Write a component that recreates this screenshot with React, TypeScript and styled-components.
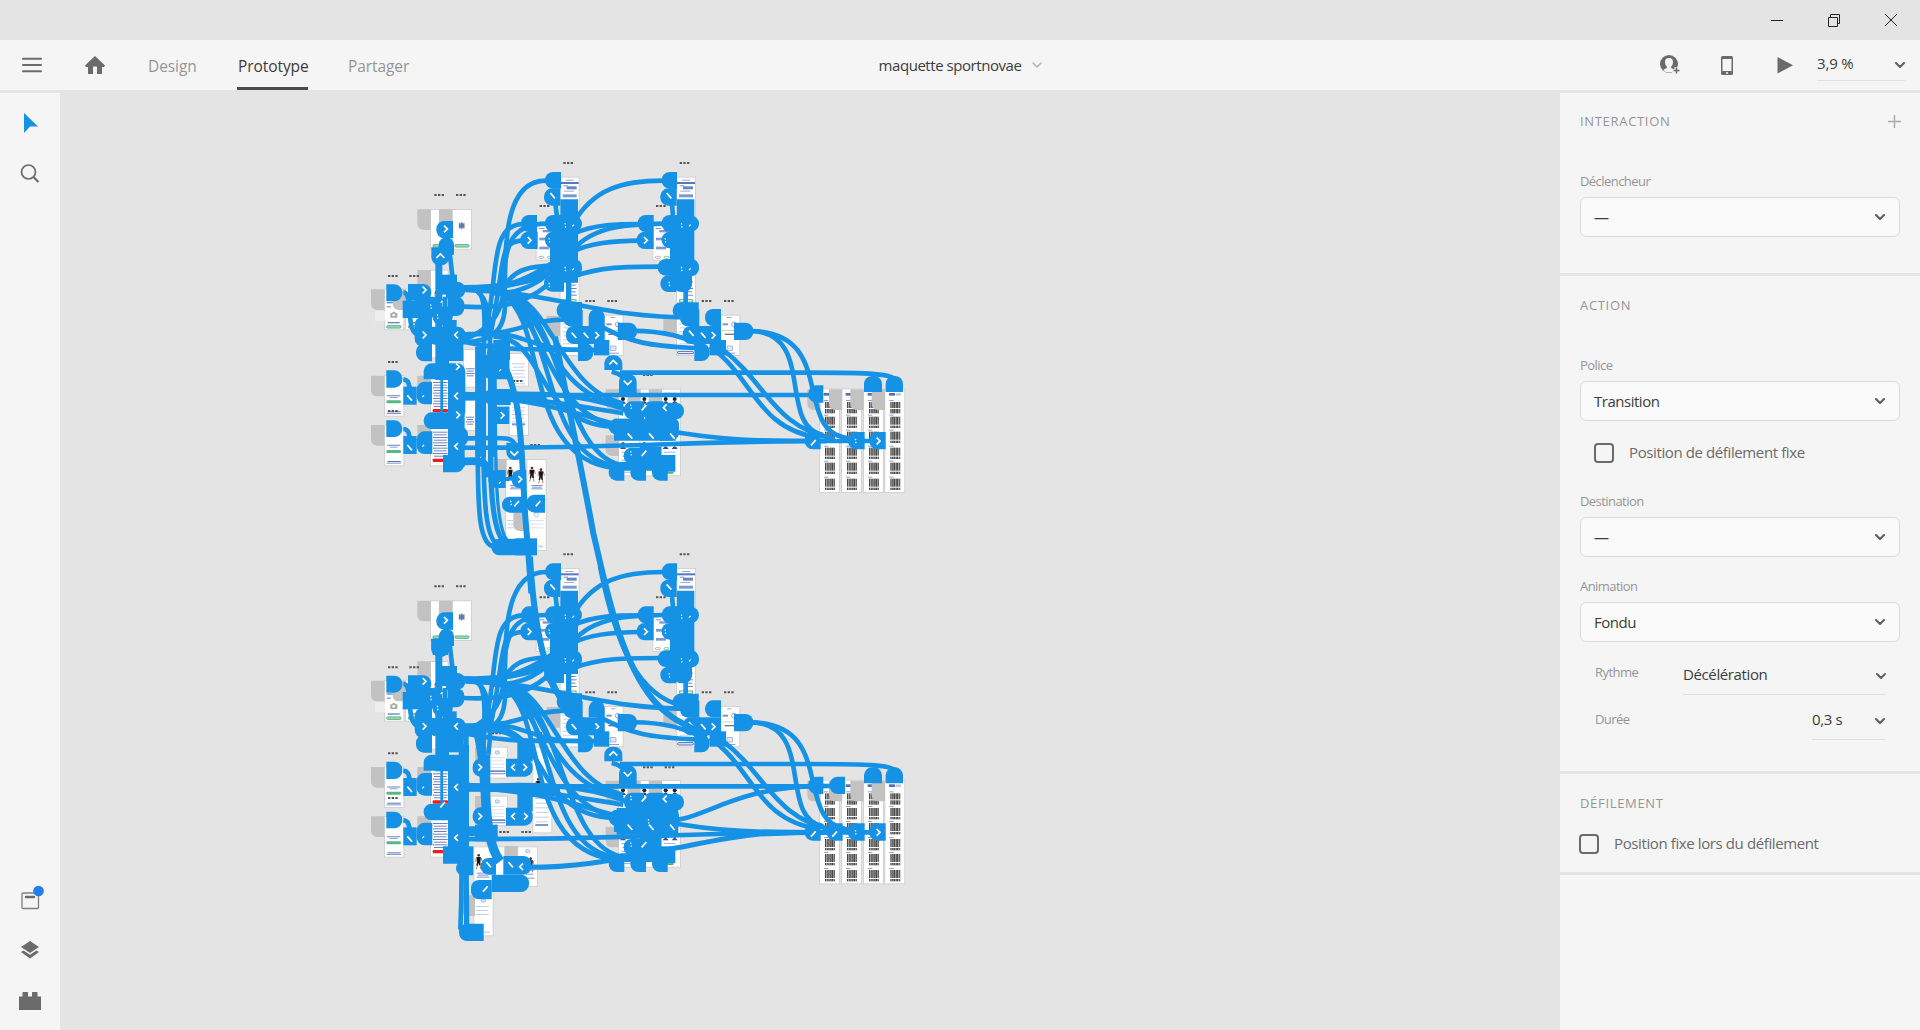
import React from "react";
import styled, { createGlobalStyle } from "styled-components";

const BLUE = "#1592e6";
const FONT = '"Open Sans", "Noto Sans", sans-serif';

const Global = createGlobalStyle`
  * { box-sizing: border-box; }
  body { margin: 0; background: #e4e4e4; font-family: ${FONT}; overflow: hidden; }
`;

const Shell = styled.div`
  display: grid;
  grid-template-rows: 40px 50px minmax(0, 1fr);
  width: 1920px;
  height: 1030px;
  background: #e4e4e4;
  color: #3c3c3c;
`;
const TitleBar = styled.header`
  display: flex;
  justify-content: flex-end;
  align-items: center;
  padding-right: 22px;
  gap: 43px;
`;
const Toolbar = styled.nav`
  display: grid;
  grid-template-columns: 1fr auto 1fr;
  background: #f5f5f5;
`;
const ToolGroup = styled.div<{ $end?: boolean }>`
  display: flex;
  justify-content: ${(p) => (p.$end ? "flex-end" : "flex-start")};
`;
const IconCell = styled.span<{ $l: number; $t: number }>`
  display: block;
  line-height: 0;
  margin-left: ${(p) => p.$l}px;
  padding-top: ${(p) => p.$t}px;
`;
const Tab = styled.a<{ $active?: boolean; $l: number; $w: number }>`
  margin-left: ${(p) => p.$l}px;
  width: ${(p) => p.$w}px;
  height: 50px;
  padding: 0 0 0 1px;
  line-height: 53px;
  font-size: 15.5px;
  letter-spacing: -0.08px;
  white-space: nowrap;
  color: ${(p) => (p.$active ? "#3c3c3c" : "#959595")};
  border-bottom: 3px solid ${(p) => (p.$active ? "#4b4b4b" : "transparent")};
`;
const FileName = styled.div`
  display: flex;
  align-items: center;
  gap: 11px;
  height: 50px;
  padding-left: 1px;
  font-size: 15px;
  letter-spacing: -0.45px;
`;
const ZoomField = styled.div`
  display: flex;
  justify-content: space-between;
  align-items: center;
  width: 88px;
  height: 32px;
  margin: 9px 15px 0 23px;
  border-bottom: 1px solid #e1e1e1;
  font-size: 15px;
  letter-spacing: -0.15px;
`;
const Value = styled.span`
  padding-bottom: 3px;
`;
const Body = styled.div`
  display: grid;
  grid-template-columns: 60px 1500px 360px;
  padding-top: 3px;
`;
const SideBar = styled.aside`
  display: flex;
  flex-direction: column;
  background: #f5f5f5;
  line-height: 0;
  padding: 20px 0 19px 19px;
`;
const Grow = styled.div`
  flex: 1;
`;
const ToolButton = styled.span<{ $gap?: number }>`
  display: block;
  margin-bottom: ${(p) => p.$gap ?? 0}px;
`;
const Canvas = styled.main`
  overflow: hidden;
  line-height: 0;
`;
const Panel = styled.aside`
  display: flex;
  flex-direction: column;
  background: #f5f5f5;
`;
const Section = styled.section<{ $h: number; $t?: number }>`
  height: ${(p) => p.$h}px;
  padding: ${(p) => p.$t ?? 18}px 20px 0;
  border-bottom: 3px solid #e4e4e4;
`;
const Heading = styled.h2`
  display: flex;
  justify-content: space-between;
  align-items: center;
  margin: 0 -1px 0 0;
  height: 20px;
  font-weight: 400;
  font-size: 13px;
  letter-spacing: 0.68px;
  color: #959595;
`;
const Label = styled.div<{ $t: number }>`
  margin-top: ${(p) => p.$t}px;
  height: 26px;
  line-height: 20px;
  font-size: 13px;
  letter-spacing: -0.56px;
  color: #959595;
`;
const Select = styled.div`
  display: flex;
  justify-content: space-between;
  align-items: center;
  height: 40px;
  padding: 0 14px 0 13px;
  border: 1px solid #dadada;
  border-radius: 6px;
  background: #fafafa;
  font-size: 15px;
  letter-spacing: -0.48px;
`;
const CheckRow = styled.label<{ $t: number; $l: number }>`
  display: flex;
  align-items: center;
  gap: 15px;
  height: 20px;
  margin: ${(p) => p.$t}px 0 0 ${(p) => p.$l}px;
  color: #6b6b6b;
  font-size: 15px;
  letter-spacing: -0.39px;
`;
const Box = styled.span`
  width: 20px;
  height: 20px;
  border: 2px solid #6b6b6b;
  border-radius: 4px;
`;
const Row = styled.div<{ $t: number; $r?: number; $lh: number }>`
  display: flex;
  justify-content: space-between;
  margin: ${(p) => p.$t}px ${(p) => p.$r ?? 14}px 0 15px;
  font-size: 13px;
  line-height: ${(p) => p.$lh}px;
  letter-spacing: -0.56px;
  color: #959595;
`;
const Inline = styled.span<{ $w: number; $b: number }>`
  display: flex;
  justify-content: space-between;
  align-items: center;
  width: ${(p) => p.$w}px;
  height: 34px;
  padding-bottom: ${(p) => p.$b}px;
  border-bottom: 1px solid #dfdfdf;
  font-size: 15px;
  letter-spacing: -0.38px;
  color: #3c3c3c;
`;

const Chevron = ({ c = "#5f5f5f", w = 2 }: { c?: string; w?: number }) => (
  <svg width="10" height="8" viewBox="0 0 10 8">
    <path d="M1 2 5 6 9 2" fill="none" stroke={c} strokeWidth={w} strokeLinecap="round" strokeLinejoin="round" />
  </svg>
);

type B4 = [number, number, number, number];

/* Artboards, handles and links are laid out in thirds of a pixel. */
const boards: B4[] = [
  [213, 180, 64, 116], [278, 180, 55, 116], [602, 83, 54, 120], [951, 83, 54, 120],
  [530, 228, 70, 101], [880, 228, 70, 101], [602, 330, 54, 130], [951, 330, 54, 130],
  [213, 362, 50, 260], [75, 418, 55, 120], [138, 418, 60, 120],
  [75, 678, 55, 119], [75, 827, 55, 119], [213, 678, 52, 119], [213, 827, 52, 119],
  [602, 497, 54, 118], [735, 497, 53, 118], [951, 497, 54, 118], [1084, 497, 54, 118],
  [777, 719, 63, 120], [841, 719, 63, 120], [905, 719, 55, 120],
  [777, 856, 63, 120], [841, 856, 63, 120], [905, 856, 55, 120],
];
const tabs: [number, number][] = [
  [172, 178], [237, 178], [172, 360], [33, 418], [98, 418], [33, 677], [33, 825], [172, 677], [172, 825],
  [560, 497], [910, 497], [737, 718], [802, 718], [866, 718], [737, 856],
];
const dots: [number, number][] = [
  [610, 36], [959, 36], [223, 132], [288, 132], [539, 165], [888, 165], [84, 375], [148, 375],
  [676, 450], [742, 450], [1025, 450], [1092, 450], [84, 633],
];

const GrayTab = ({ x, y }: { x: number; y: number }) => (
  <path d={`M${x} ${y}h40v62h-20q-20 0 -20 -20z`} fill="#c2c2c2" />
);
const Dots = ({ x, y }: { x: number; y: number }) => (
  <path d={`M${x} ${y}h7v6h-7zM${x + 11} ${y}h7v6h-7zM${x + 22} ${y}h7v6h-7z`} fill="#555" />
);
const Board = ({ b }: { b: B4 }) => (
  <rect x={b[0] - 1.5} y={b[1] - 1.5} width={b[2] + 3} height={b[3] + 3} fill="#fff" stroke="#d2d2d2" strokeWidth="3" />
);

/* A handle rounded on one side: l, r, u or d. */
const pinPath = (x: number, y: number, w: number, h: number, s: string) => {
  const r = Math.min(24, (s === "l" || s === "r" ? h : w) / 2);
  const a = `a${r} ${r} 0 0`;
  if (s === "l") return `M${x + w} ${y}v${h}h${r - w}${a} 1 ${-r} ${-r}v${2 * r - h}${a} 1 ${r} ${-r}z`;
  if (s === "r") return `M${x} ${y}v${h}h${w - r}${a} 0 ${r} ${-r}v${2 * r - h}${a} 0 ${-r} ${-r}z`;
  if (s === "u") return `M${x} ${y + h}h${w}v${r - h}${a} 0 ${-r} ${-r}h${2 * r - w}${a} 0 ${-r} ${r}z`;
  if (s === "d") return `M${x} ${y}h${w}v${h - r}${a} 1 ${-r} ${r}h${2 * r - w}${a} 1 ${-r} ${-r}z`;
  return `M${x} ${y}h${w}v${h}h${-w}z`;
};
type P5 = [number, number, number, number, string];
const pins: P5[] = [
  [555, 66, 48, 50, "l"], [552, 115, 49, 52, "l"], [905, 66, 46, 50, "l"], [901, 115, 49, 52, "l"],
  [483, 195, 48, 51, "l"], [481, 245, 52, 52, "l"], [833, 195, 48, 51, "l"], [830, 245, 51, 52, "l"],
  [555, 195, 50, 51, "l"], [905, 195, 50, 51, "l"], [555, 245, 50, 50, "l"], [905, 245, 50, 50, "l"],
  [601, 148, 53, 250, ""], [951, 148, 52, 216, ""], [600, 197, 66, 48, "r"], [951, 197, 66, 48, "r"],
  [570, 290, 40, 100, ""], [930, 245, 68, 100, ""], [600, 327, 66, 54, "r"], [951, 327, 66, 52, "r"],
  [552, 375, 60, 50, "l"], [893, 327, 60, 50, "l"], [901, 376, 48, 50, "l"], [940, 370, 56, 56, "d"],
  [970, 400, 14, 70, ""], [618, 370, 16, 100, ""], [590, 456, 76, 50, "l"], [610, 480, 58, 50, "l"],
  [938, 457, 78, 50, "l"], [960, 478, 58, 51, "l"], [686, 477, 48, 51, "u"], [1035, 477, 48, 51, "l"],
  [618, 528, 53, 54, "l"], [668, 528, 66, 54, ""], [968, 528, 53, 54, "l"], [1018, 528, 65, 54, ""],
  [702, 570, 46, 46, ""], [654, 580, 46, 53, "r"], [1003, 580, 46, 53, "r"], [1049, 570, 49, 46, ""],
  [773, 518, 58, 52, "r"], [1122, 518, 58, 52, "r"], [733, 616, 54, 44, "u"], [777, 672, 53, 58, "u"],
  [229, 213, 50, 52, "l"], [236, 262, 46, 52, "u"], [214, 292, 54, 54, "d"],
  [79, 403, 48, 51, "r"], [144, 402, 70, 50, "r"], [258, 395, 58, 50, "r"], [246, 374, 45, 60, ""],
  [128, 452, 60, 52, ""], [165, 440, 80, 62, "r"], [263, 440, 50, 58, "r"], [218, 470, 60, 56, "d"],
  [164, 500, 52, 90, "l"], [215, 530, 102, 52, "r"], [260, 510, 30, 30, ""], [168, 580, 48, 54, "l"],
  [232, 575, 78, 58, ""], [191, 640, 75, 48, "u"], [264, 640, 52, 168, "r"], [235, 560, 32, 130, ""],
  [79, 661, 48, 52, "r"], [130, 710, 40, 54, ""], [170, 695, 46, 68, "l"],
  [79, 811, 48, 50, "r"], [130, 858, 40, 54, ""], [170, 844, 47, 68, "l"],
  [191, 787, 76, 50, "l"], [264, 780, 50, 170, ""], [249, 915, 64, 52, "r"],
  [264, 830, 60, 60, "r"], [226, 340, 9, 350, ""], [241, 680, 8, 120, ""],
  [792, 754, 60, 54, "l"], [850, 754, 60, 60, "l"], [900, 758, 72, 50, "r"], [746, 806, 70, 48, "l"],
  [762, 806, 185, 66, ""], [900, 800, 57, 72, "r"], [791, 893, 64, 50, "l"], [840, 890, 64, 60, ""],
  [746, 942, 47, 50, "l"], [811, 942, 47, 50, "l"], [876, 942, 47, 50, "l"], [780, 936, 160, 26, ""],
  [890, 915, 56, 50, ""],
  [1345, 706, 45, 52, "l"], [1512, 678, 54, 48, "u"], [1577, 678, 52, 48, "u"],
  [1334, 846, 48, 52, "l"], [1464, 846, 50, 52, "l"], [1528, 846, 49, 52, "l"],
];

const links: string[] = [
  "M300 572C470 520 425 380 440 270C450 150 490 92 558 92", "M370 570C420 400 380 222 490 222",
  "M390 560C440 330 410 272 490 272", "M430 420C430 260 470 222 560 221",
  "M640 220C700 115 790 92 910 92", "M640 252C700 222 780 222 840 222", "M640 300C700 225 820 222 910 221",
  "M640 304C700 275 780 272 840 272", "M640 380C720 350 800 350 905 350",
  "M310 412C450 420 520 380 620 310", "M440 400C470 352 520 350 580 347", "M310 412C470 410 560 400 630 310",
  "M310 470C450 478 520 450 590 380", "M316 418C500 415 520 380 610 320", "M400 430C480 430 560 400 600 320",
  "M316 420C620 430 690 502 1010 503", "M280 552C500 560 480 510 620 508", "M290 570C450 610 560 595 720 600",
  "M300 576C440 580 440 500 433 400", "M700 515C820 590 900 588 1020 595", "M800 543C900 540 980 560 1040 596",
  "M400 552C480 550 520 590 620 600", "M585 150L592 210", "M935 150L940 210", "M130 428C165 428 130 552 180 555",
  "M240 340V650", "M268 300L282 420", "M255 440V640", "M130 688C150 690 145 710 152 720", "M130 837C150 838 145 858 152 870",
  "M340 420C390 420 370 560 368 700", "M316 412C400 410 395 560 385 640",
  "M755 665C790 672 800 690 803 710", "M780 668H1350C1530 668 1600 672 1606 690",
  "M290 735H1380", "M280 893C760 896 1000 873 1400 873", "M900 838C1080 873 1200 873 1400 873",
  "M1170 543C1370 543 1250 830 1390 855", "M1170 543C1440 545 1290 850 1470 865",
  "M1050 590C1180 680 1190 840 1380 863", "M1090 600C1220 700 1240 830 1420 866", "M1380 873H1550",
];
const fans: string[] = [
  "M420 424C560 450 540 720 790 770", "M430 424C580 450 600 720 790 760", "M400 560C560 560 520 820 760 830",
  "M410 424C540 450 560 800 770 826", "M420 430C570 500 480 930 770 955", "M430 430C590 500 540 930 775 948",
  "M440 430C620 500 600 930 800 948", "M290 735C500 730 640 720 800 780", "M290 735C560 750 640 790 780 826",
  "M300 745C520 740 600 760 790 790",
];

type A3 = [number, number, string];
const arrows: A3[] = [
  [257, 237, "r"], [241, 318, "u"], [193, 420, "r"], [193, 555, "r"], [289, 555, "l"], [508, 271, "r"], [857, 271, "r"],
  [578, 137, "s"], [927, 137, "s"], [642, 556, "s"], [678, 556, "s"], [711, 556, "r"], [994, 550, "s"], [1030, 556, "s"],
  [1060, 556, "r"], [760, 637, "u"], [803, 698, "d"], [289, 738, "l"], [289, 889, "l"], [149, 744, "s"], [149, 893, "s"],
  [852, 773, "z"], [915, 773, "l"], [810, 858, "s"], [874, 858, "s"], [937, 858, "s"], [852, 910, "z"],
  [1360, 878, "z"], [1489, 873, "t"], [1555, 873, "r"], [618, 226, "t"], [640, 226, "v"], [967, 226, "t"], [990, 226, "v"],
  [967, 357, "t"], [990, 357, "v"], [618, 357, "t"], [640, 357, "v"], [570, 271, "t"], [918, 271, "t"], [570, 405, "t"],
  [930, 402, "t"], [815, 770, "t"], [815, 910, "t"], [225, 430, "t"], [215, 470, "t"], [235, 500, "t"], [245, 455, "v"],
  [190, 738, "v"], [190, 887, "v"],
];
const glyph: Record<string, string> = {
  r: "M-5-10 5 0-5 10", l: "M5-10-5 0 5 10", u: "M-12 6 0-6 12 6", d: "M-12-6 0 6 12-6",
  s: "M-7-8 7 8", z: "M7-8-7 8", t: "M-4-6-1-3M-3 6 0 3", v: "M-3 3 2-2",
};
const Arrow = ({ a }: { a: A3 }) => (
  <path d={glyph[a[2]]} transform={`translate(${a[0]} ${a[1]})`} fill="none" stroke="#fff" strokeWidth={a[2] === "t" || a[2] === "v" ? 3.5 : 5} />
);

const Lines = ({ x, y, n, w, c = "#7d97cf", s = 9 }: { x: number; y: number; n: number; w: number; c?: string; s?: number }) => (
  <g fill={c}>
    {Array.from({ length: n }, (_, i) => (
      <rect key={i} x={x + (i % 2) * 3} y={y + i * s} width={w - (i % 2) * 6} height="3" />
    ))}
  </g>
);

const CodeBoard = ({ x }: { x: number }) => (
  <g>
    <Board b={[x, 718, 57, 308]} />
    <rect x={x + 11} y="729" width="18" height="8" fill="#5470ae" />
    <rect x={x + 31} y="729" width="16" height="8" fill="#c0cbe6" />
    {[756, 800, 845, 893, 938, 986].map((y) => (
      <g key={y}>
        <rect x={x + 12} y={y - 6} width="13" height="3" fill="#8ba1d4" />
        {[0, 1, 2, 3, 4, 5].map((i) => (
          <rect key={i} x={x + 15 + i * 5} y={y} width={i % 2 ? 5 : 4} height="34" fill={i % 2 ? "#666" : "#484848"} />
        ))}
        <rect x={x + 10} y={y + 18 + (y % 3) * 3} width="38" height="3" fill="#fff" />
      </g>
    ))}
  </g>
);

const Runner = ({ x, y }: { x: number; y: number }) => (
  <g transform={`translate(${x} ${y})`}>
    <circle cx="0" cy="4" r="4" fill="#4b3429" />
    <path d="M-7 9H7L5 24H-5z" fill="#161616" />
    <path d="M-7 10l-2 14M7 10l3 12M-3 32l-4 13M4 32l2 13" stroke="#bd805c" strokeWidth="3" />
    <path d="M-5 23H5L6 34H1L0 27l-3 8h-4z" fill="#222" />
  </g>
);

const Content = () => (
  <g>
    {[602, 951].map((x) => (
      <g key={x}>
        <rect x={x + 14} y="89" width="26" height="3" fill="#9bacd7" />
        <rect x={x} y="96" width="54" height="6" fill="#5877b9" />
        <Lines x={x + 8} y={106} n={1} w={14} />
        <rect x={x + 18} y="109" width="30" height="9" fill="#6a85c3" />
        <rect x={x + 10} y="122" width="30" height="3" fill="#9bacd7" />
        <rect x={x + 6} y="133" width="42" height="9" fill="#7d97cf" />
        <Lines x={x + 24} y={394} n={5} w={24} c="#6a85c3" s={10} />
        <rect x={x + 8} y="449" width="38" height="7" fill="none" stroke="#55b47c" strokeWidth="3" />
        <Lines x={x + 5} y={520} n={7} w={40} c="#c5cfe7" s={12} />
      </g>
    ))}
    {[530, 880].map((x) => (
      <g key={x}>
        <Lines x={x + 7} y={234} n={1} w={16} />
        <rect x={x + 18} y="240" width="26" height="7" fill="#7d97cf" />
        <rect x={x + 8} y="263" width="30" height="8" fill="#7d97cf" />
        <rect x={x + 8} y="290" width="30" height="8" fill="#7d97cf" />
        <rect x={x + 6} y="319" width="15" height="6" rx="3" fill="none" stroke="#999" strokeWidth="2" />
        <rect x={x + 32} y="319" width="15" height="6" rx="3" fill="none" stroke="#54b77a" strokeWidth="2" />
      </g>
    ))}
    <circle cx="305" cy="227" r="8" fill="#7189be" />
    <path d="M305 216v22M298 218v18M312 218v18" stroke="#405d9f" strokeWidth="2" />
    {[219, 285].map((x) => <rect key={x} x={x} y="284" width="42" height="7" rx="3" fill="#b3dfc6" stroke="#4caf78" strokeWidth="3" />)}
    {[80, 145].map((x) => (
      <g key={x}>
        <rect x={x} y="527" width="43" height="7" rx="3" fill="#b3dfc6" stroke="#4caf78" strokeWidth="3" />
        <rect x={x + 3} y="516" width="36" height="4" fill="#6886c6" />
      </g>
    ))}
    <rect x="80" y="456" width="18" height="4" fill="#6886c6" /><rect x="80" y="469" width="13" height="3" fill="#6886c6" />
    <path d="M91 489h5l3-4h5l3 4h5v14h-21z" fill="#ababab" /><circle cx="101" cy="495" r="4" fill="#fff" />
    <rect x="45" y="483" width="30" height="30" fill="#eee" />
    {[678, 827].map((y) => (
      <g key={y}>
        <rect x="81" y={y + 57} width="40" height="4" fill="#8ba1d4" /><rect x="89" y={y + 63} width="24" height="3" fill="#8ba1d4" />
        <rect x="79" y={y + 73} width="44" height="9" rx="4" fill="#58b885" />
        <rect x="82" y={y + 106} width="40" height="3" fill="#5877b9" /><rect x="80" y={y + 111} width="43" height="3" fill="#7d97cf" />
        <Lines x={219} y={y + 18} n={10} w={44} c="#6a82c2" s={8} />
        <rect x="218" y={y + 99} width="46" height="10" rx="3" fill="#f31b1b" />
      </g>
    ))}
    {[735, 1084].map((x) => (
      <g key={x}>
        <rect x={x + 17} y="501" width="14" height="3" fill="#9bacd7" />
        <rect x={x + 4} y="520" width="16" height="6" fill="#8297c6" />
        <circle cx={x + 38} cy="523" r="7" fill="none" stroke="#92a6d3" strokeWidth="3" />
        <rect x={x + 2} y="541" width="48" height="2" fill="#bbb" /><rect x={x + 10} y="551" width="28" height="4" fill="#777" />
        <rect x={x + 17} y="588" width="16" height="14" fill="#dfe6f5" stroke="#8ba1d4" strokeWidth="2" />
        <rect x={x + 8} y="608" width="34" height="3" fill="#8ba1d4" />
      </g>
    ))}
    <rect x="953" y="604" width="47" height="7" rx="2" fill="#eef" stroke="#4968ae" strokeWidth="3" />
    {[789, 853, 917, 944].map((x) => [744, 880].map((y) => (
      <g key={x + "-" + y}>
        <circle cx={x} cy={y + 3} r="6" fill="#202020" /><path d={`M${x - 9} ${y + 17}q9-16 18 0z`} fill="#3e4d84" />
      </g>
    )))}
    <Lines x={783} y={728} n={1} w={28} c="#bbc6e3" /><Lines x={912} y={728} n={1} w={40} c="#bbc6e3" />
    <Lines x={784} y={905} n={6} w={34} c="#a4b5dc" s={12} /><Lines x={912} y={905} n={6} w={34} c="#a4b5dc" s={12} />
    <rect x="916" y="966" width="24" height="5" rx="2" fill="#4caf78" />
    <rect x="219" y="446" width="40" height="6" fill="#4caf78" /><rect x="219" y="578" width="40" height="6" fill="#4caf78" />
    <Runner x={232} y={415} />
  </g>
);

const Cluster = ({ extraBoards, extraTabs, extraDots, extraContent, extraLinks, extraPins, extraArrows }: {
  extraBoards: B4[]; extraTabs: [number, number][]; extraDots: [number, number][]; extraContent: React.ReactNode;
  extraLinks: [string, number][]; extraPins: P5[]; extraArrows: A3[];
}) => (
  <g>
    {[...boards, ...extraBoards].map((b, i) => <Board key={i} b={b} />)}
    {[1380, 1446, 1512, 1576].map((x) => <CodeBoard key={x} x={x} />)}
    {[...tabs, ...extraTabs, [1342, 718], [1407, 718], [1471, 718], [1535, 718]].map((t, i) => <GrayTab key={i} x={t[0]} y={t[1]} />)}
    <Content />
    {extraContent}
    {[...dots, ...extraDots].map((d, i) => <Dots key={i} x={d[0]} y={d[1]} />)}
    <g fill="none" stroke={BLUE} strokeWidth="14">
      {[...links, ...fans].map((d, i) => <path key={i} d={d} />)}
      {extraLinks.map(([d, w], i) => <path key={i} d={d} strokeWidth={w} />)}
    </g>
    <g fill={BLUE}>
      {[...pins, ...extraPins].map((p, i) => <path key={i} d={pinPath(...p)} />)}
    </g>
    {[...arrows, ...extraArrows].map((a, i) => <Arrow key={i} a={a} />)}
  </g>
);

const Prototype = () => (
  <svg width="1500" height="937" viewBox="60 93 1500 937">
    <g transform="translate(360 150) scale(0.333333)">
      <Cluster
        extraBoards={[[312, 600, 56, 110], [312, 750, 56, 90], [449, 612, 55, 95], [449, 755, 55, 100],
          [438, 930, 61, 120], [502, 930, 55, 120], [438, 1050, 61, 150], [502, 1050, 55, 150]]}
        extraTabs={[[400, 927], [460, 1081]]}
        extraDots={[[325, 545], [458, 690], [84, 780], [448, 882], [511, 882], [849, 672]]}
        extraContent={<g>
          <Lines x={455} y={640} n={7} w={40} c="#c5cfe7" s={10} /><Lines x={455} y={770} n={5} w={40} c="#c5cfe7" s={11} />
          <rect x="456" y="820" width="40" height="6" fill="#7d97cf" />
          <Lines x={318} y={655} n={4} w={26} c="#6a85c3" s={7} /><Lines x={318} y={800} n={4} w={24} c="#6a85c3" s={7} />
          <Runner x={451} y={950} /><Runner x={516} y={950} /><Runner x={543} y={955} />
          <Lines x={514} y={1005} n={3} w={34} s={5} /><Lines x={450} y={1005} n={3} w={34} s={5} />
          <circle cx="529" cy="1095" r="6" fill="none" stroke="#9bacd7" strokeWidth="2" />
          <Lines x={441} y={1110} n={3} w={24} c="#c5cfe7" s={11} /><Lines x={508} y={1110} n={3} w={44} c="#dce2f0" s={11} />
          <rect x="534" y="1186" width="16" height="7" rx="3" fill="#d2daee" />
        </g>}
        extraLinks={[
          ["M353 590V900C355 1040 350 1188 405 1190", 14], ["M370 590V900C372 1040 375 1180 420 1185", 14],
          ["M392 580V920C392 1060 405 1165 440 1180", 16], ["M404 620C410 850 395 1150 450 1178", 10],
          ["M400 600C500 700 480 950 500 1150C506 1220 512 1300 514 1330", 18],
          ["M300 865C430 865 460 855 466 890", 14],
          ["M300 935C360 930 380 930 390 980", 24], ["M395 990C430 990 440 985 470 985", 12],
          ["M315 735L550 746", 20],
        ]}
        extraPins={[[346, 590, 32, 330, ""], [384, 640, 24, 280, ""], [370, 610, 78, 78, "l"],
          [400, 570, 50, 60, ""], [372, 717, 80, 48, "l"], [410, 770, 38, 52, ""], [439, 878, 52, 52, "d"],
          [385, 960, 52, 54, "l"], [455, 960, 44, 54, "l"], [426, 1040, 64, 48, "l"], [500, 1034, 55, 54, "l"],
          [394, 1166, 100, 50, "l"], [466, 1165, 65, 51, ""]]}
        extraArrows={[[293, 650, "r"], [294, 795, "r"], [427, 796, "r"], [463, 910, "d"], [480, 988, "r"], [470, 1061, "z"], [534, 1061, "z"],
          [455, 1059, "t"], [420, 998, "v"], [421, 660, "v"]]}
      />
      <g transform="translate(0 1174)">
        <Cluster
          extraBoards={[[385, 619, 56, 90], [385, 766, 56, 85], [520, 619, 54, 110], [520, 766, 54, 107],
            [343, 918, 60, 110], [405, 918, 68, 116], [475, 918, 56, 116], [343, 1062, 55, 120]]}
          extraTabs={[[345, 618], [345, 764], [433, 914], [305, 1062]]}
          extraDots={[[395, 573], [528, 573], [84, 767], [418, 869], [484, 869], [849, 675], [914, 675]]}
          extraContent={<g>
            {[619, 766].map((y) => <g key={y}>
              <rect x="406" y={y + 10} width="12" height="9" rx="3" fill="#dfe6f5" stroke="#8ba1d4" strokeWidth="2" />
              <Lines x={388} y={y + 28} n={4} w={46} c="#dce2f0" s={10} />
              <rect x="390" y={y + 68} width="46" height="5" fill="#6a85c3" /><rect x="390" y={y + 76} width="46" height="4" fill="#8ba1d4" />
            </g>)}
            <Runner x={535} y={710} /><Runner x={356} y={938} /><Runner x={512} y={948} />
            <Lines x={525} y={770} n={6} w={42} c="#c5cfe7" s={14} /><rect x="526" y="848" width="38" height="6" fill="#7d97cf" />
            <Lines x={350} y={994} n={3} w={38} s={6} />
            <rect x="497" y="925" width="12" height="9" rx="3" fill="#dfe6f5" stroke="#8ba1d4" strokeWidth="2" />
            <Lines x={495} y={985} n={3} w={28} s={12} />
            <rect x="364" y="1073" width="12" height="9" rx="3" fill="#dfe6f5" stroke="#8ba1d4" strokeWidth="2" />
            <Lines x={346} y={1094} n={3} w={40} c="#c5cfe7" s={12} />
            <rect x="372" y="1170" width="18" height="6" rx="3" fill="#d2daee" />
          </g>}
          extraLinks={[
            ["M303 560V900C306 1000 304 1100 301 1165", 14], ["M318 560V950L320 1150", 16],
            ["M350 560C390 700 360 880 420 960", 28], ["M505 978C700 978 820 940 960 918C1050 900 1120 885 1200 878C1300 873 1350 873 1400 873", 15],
            ["M900 838C1020 850 1100 740 1370 734", 14], ["M1380 734H1420", 14], ["M290 735L600 747", 24],
            ["M300 870H400", 30], ["M300 590C330 560 450 540 500 620", 20],
          ]}
          extraPins={[[214, 292, 54, 54, "d"], [300, 610, 27, 330, ""], [338, 652, 34, 54, "l"], [338, 798, 34, 54, "l"], [365, 640, 26, 260, ""],
            [438, 652, 80, 54, "r"], [438, 799, 80, 54, "r"], [472, 600, 46, 60, ""], [472, 750, 46, 60, ""],
            [345, 850, 68, 50, ""], [290, 915, 50, 54, ""], [288, 960, 52, 42, "l"], [362, 950, 46, 50, "l"], [430, 944, 84, 56, "r"],
            [395, 1000, 112, 52, "r"], [333, 1016, 62, 58, "l"], [297, 1147, 74, 52, "l"],
            [1409, 706, 46, 52, "l"], [1400, 846, 48, 52, "l"], [770, 800, 185, 80, ""]]}
          extraArrows={[[360, 678, "r"], [460, 678, "l"], [495, 678, "r"], [360, 825, "r"], [460, 825, "l"], [497, 825, "r"],
            [386, 970, "s"], [452, 970, "s"], [484, 976, "l"], [376, 1043, "z"], [248, 790, "z"], [868, 840, "t"], [1424, 878, "z"]]}
        />
      </g>
      <path d="M218 1470h46v45h-46z" fill={BLUE} />
      <g fill="none" stroke={BLUE} strokeWidth="18">
        <path d="M585 560C640 850 650 880 700 1150C740 1320 780 1530 880 1650C940 1720 1000 1730 1040 1760" />
        <path d="M720 1250C770 1500 840 1640 970 1668" strokeWidth="14" />
        <path d="M510 1220C520 1400 545 1560 610 1660C640 1710 680 1740 720 1750" />
        <path d="M550 1530C570 1600 590 1640 630 1660" />
      </g>
    </g>
  </svg>
);

export default function App() {
  return (
    <>
      <Global />
      <Shell>
        <TitleBar>
          <svg width="14" height="14"><path d="M1 7.5H13" stroke="#222" /></svg>
          <svg width="14" height="14" fill="none" stroke="#222"><path d="M1.5 4.5h9v9h-9zM3.5 4.5v-3h9v9h-2" /></svg>
          <svg width="14" height="14" stroke="#222"><path d="M1 1 13 13M13 1 1 13" /></svg>
        </TitleBar>
        <Toolbar>
          <ToolGroup>
            <IconCell $l={22} $t={17}>
              <svg width="20" height="16" stroke="#6b6b6b" strokeWidth="2" strokeLinecap="round"><path d="M1 1.8H19M1 8H19M1 14.2H19" /></svg>
            </IconCell>
            <IconCell $l={43} $t={16}>
              <svg width="20" height="19" fill="#6b6b6b"><path d="M10 0 20 9.6 19 11H17V18H12V11.5Q12 10.5 11 10.5H9Q8 10.5 8 11.5V18H3V11H1L0 9.6Z" /></svg>
            </IconCell>
            <Tab $l={42} $w={51}>Design</Tab>
            <Tab $l={39} $w={71} $active>Prototype</Tab>
            <Tab $l={39} $w={61}>Partager</Tab>
          </ToolGroup>
          <FileName>maquette sportnovae <Chevron c="#b5b5b5" w={1.6} /></FileName>
          <ToolGroup $end>
            <IconCell $l={0} $t={15}>
              <svg width="21" height="20"><circle cx="9" cy="9" r="9" fill="#6b6b6b" /><path d="M9 3Q13 3 13 7.2 13 10 11.2 11.5V13L15 15Q12.5 17.6 9 17.6T3 15L6.8 13V11.5Q5 10 5 7.2 5 3 9 3Z" fill="#f5f5f5" /><path d="M16.5 12V20M12.5 16H20.5" stroke="#f5f5f5" strokeWidth="4" /><path d="M16.5 12.5V18.5M13.5 15.5H19.5" stroke="#6b6b6b" strokeWidth="1.5" /></svg>
            </IconCell>
            <IconCell $l={40} $t={16}>
              <svg width="12" height="19"><rect width="12" height="19" rx="1.5" fill="#6b6b6b" /><path d="M1.5 3h9v12h-9z" fill="#f5f5f5" /><circle cx="6" cy="17" r="1" fill="#f5f5f5" /></svg>
            </IconCell>
            <IconCell $l={44} $t={17}>
              <svg width="17" height="17"><path d="M.5 0 16 8.3.5 16.6Z" fill="#6b6b6b" /></svg>
            </IconCell>
            <ZoomField><Value>3,9 %</Value> <Chevron /></ZoomField>
          </ToolGroup>
        </Toolbar>
        <Body>
          <SideBar>
            <ToolButton $gap={30}><svg width="22" height="21"><path d="M5 0 19 13.5H11L5 20Z" fill={BLUE} /></svg></ToolButton>
            <ToolButton><svg width="22" height="20" fill="none" stroke="#6b6b6b" strokeWidth="1.7"><circle cx="9.5" cy="8" r="7" /><path d="M14.5 13 19.5 18" strokeWidth="2.2" /></svg></ToolButton>
            <Grow />
            <ToolButton $gap={30}><svg width="26" height="26"><rect x="3" y="9" width="16.5" height="15.5" rx="1" fill="none" stroke="#808080" strokeWidth="1.3" /><path d="M7 13H15" stroke="#6b6b6b" strokeWidth="2.5" strokeLinecap="round" /><circle cx="19.5" cy="7" r="5.3" fill="#237de8" /></svg></ToolButton>
            <ToolButton $gap={31}><svg width="22" height="20" fill="#6b6b6b"><path d="M11 1 20 7 11 13 2 7ZM2 12 4.5 10.5 11 14.7 17.5 10.5 20 12 11 18.5Z" /></svg></ToolButton>
            <ToolButton><svg width="24" height="20" fill="#6b6b6b"><path d="M0 19V5.5H3.5V1.5Q3.5 1 4 1H8.5Q9 1 9 1.5V5.5H13V1.5Q13 1 13.5 1H18Q18.5 1 18.5 1.5V5.5H22V19Z" /></svg></ToolButton>
          </SideBar>
          <Canvas><Prototype /></Canvas>
          <Panel>
            <Section $h={183}>
              <Heading>INTERACTION <svg width="13" height="13"><path d="M6.5 0V13M0 6.5H13" stroke="#aaa" strokeWidth="1.5" /></svg></Heading>
              <Label $t={40}>Déclencheur</Label>
              <Select>— <Chevron /></Select>
            </Section>
            <Section $h={498} $t={19}>
              <Heading>ACTION</Heading>
              <Label $t={40}>Police</Label>
              <Select>Transition <Chevron /></Select>
              <CheckRow $t={22} $l={14}><Box /><Value>Position de défilement fixe</Value></CheckRow>
              <Label $t={28}>Destination</Label>
              <Select>— <Chevron /></Select>
              <Label $t={19}>Animation</Label>
              <Select>Fondu <Chevron /></Select>
              <Row $t={19} $lh={23}>Rythme <Inline $w={203} $b={3}><Value>Décélération</Value> <Chevron /></Inline></Row>
              <Row $t={11} $r={15} $lh={26}>Durée <Inline $w={73} $b={4}><Value>0,3 s</Value> <Chevron /></Inline></Row>
            </Section>
            <Section $h={101} $t={19}>
              <Heading>DÉFILEMENT</Heading>
              <CheckRow $t={21} $l={-1}><Box /><Value>Position fixe lors du défilement</Value></CheckRow>
            </Section>
          </Panel>
        </Body>
      </Shell>
    </>
  );
}
